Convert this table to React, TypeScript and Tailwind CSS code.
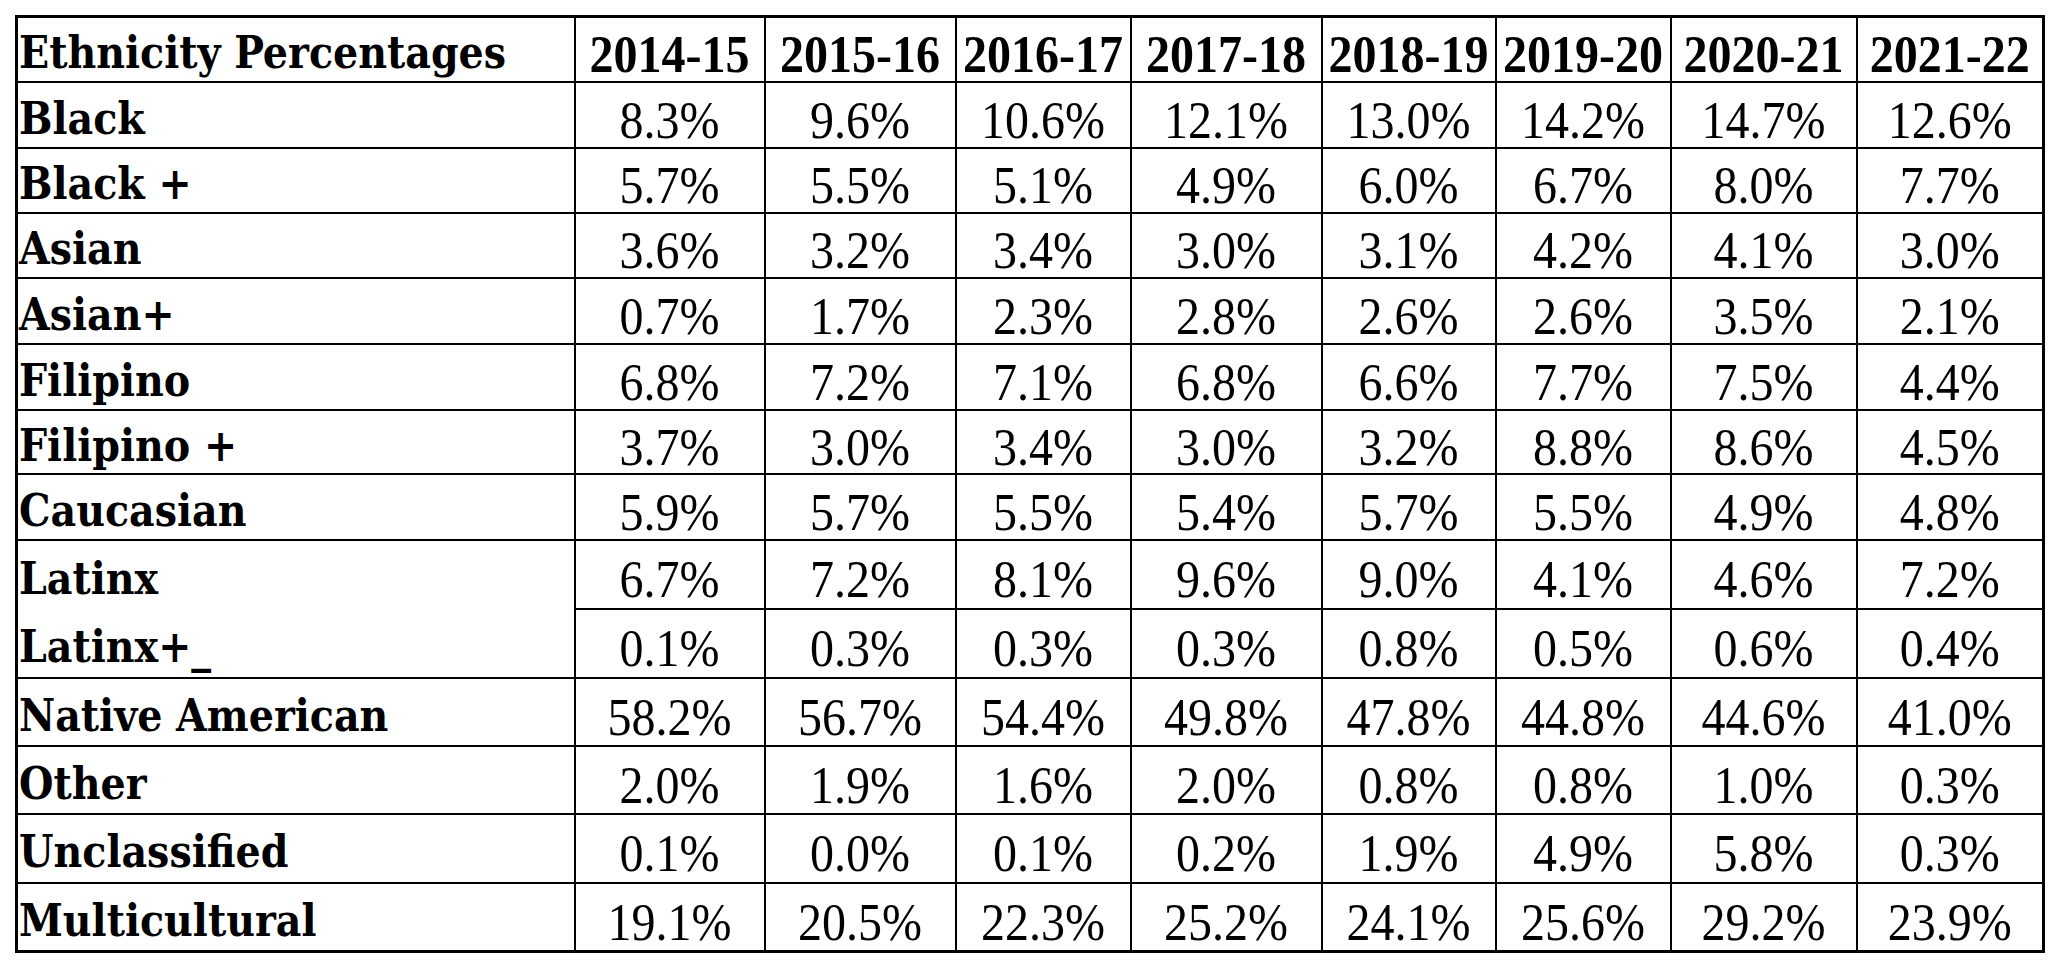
import React from 'react';

const years = ['2014-15', '2015-16', '2016-17', '2017-18', '2018-19', '2019-20', '2020-21', '2021-22'];

// line-to-line widths read off the reference
const colWidths = [558, 190, 191, 175, 191, 174, 175, 186, 187];

type Row = { label: string; values: string[]; h: number; open?: 'top' | 'bottom' };

const rows: Row[] = [
  { label: 'Black', values: ['8.3%', '9.6%', '10.6%', '12.1%', '13.0%', '14.2%', '14.7%', '12.6%'], h: 66 },
  { label: 'Black +', values: ['5.7%', '5.5%', '5.1%', '4.9%', '6.0%', '6.7%', '8.0%', '7.7%'], h: 65 },
  { label: 'Asian', values: ['3.6%', '3.2%', '3.4%', '3.0%', '3.1%', '4.2%', '4.1%', '3.0%'], h: 65 },
  { label: 'Asian+', values: ['0.7%', '1.7%', '2.3%', '2.8%', '2.6%', '2.6%', '3.5%', '2.1%'], h: 66 },
  { label: 'Filipino', values: ['6.8%', '7.2%', '7.1%', '6.8%', '6.6%', '7.7%', '7.5%', '4.4%'], h: 66 },
  { label: 'Filipino +', values: ['3.7%', '3.0%', '3.4%', '3.0%', '3.2%', '8.8%', '8.6%', '4.5%'], h: 64 },
  { label: 'Caucasian', values: ['5.9%', '5.7%', '5.5%', '5.4%', '5.7%', '5.5%', '4.9%', '4.8%'], h: 66 },
  { label: 'Latinx', values: ['6.7%', '7.2%', '8.1%', '9.6%', '9.0%', '4.1%', '4.6%', '7.2%'], h: 69, open: 'top' },
  { label: 'Latinx+_', values: ['0.1%', '0.3%', '0.3%', '0.3%', '0.8%', '0.5%', '0.6%', '0.4%'], h: 69, open: 'bottom' },
  { label: 'Native American', values: ['58.2%', '56.7%', '54.4%', '49.8%', '47.8%', '44.8%', '44.6%', '41.0%'], h: 68 },
  { label: 'Other', values: ['2.0%', '1.9%', '1.6%', '2.0%', '0.8%', '0.8%', '1.0%', '0.3%'], h: 68 },
  { label: 'Unclassified', values: ['0.1%', '0.0%', '0.1%', '0.2%', '1.9%', '4.9%', '5.8%', '0.3%'], h: 69 },
  { label: 'Multicultural', values: ['19.1%', '20.5%', '22.3%', '25.2%', '24.1%', '25.6%', '29.2%', '23.9%'], h: 69 },
];

const labelFont = "[font-family:'DejaVu_Serif',serif] font-stretch-condensed font-bold text-[44px] leading-none";
const timesFont = "[font-family:'Liberation_Serif','Times_New_Roman',Times,serif] text-[48px] leading-none";

// the source picture is a little taller than the font draws
const Tall = ({ children }: { children: React.ReactNode }) => (
  <span className="inline-block scale-y-[1.1]">{children}</span>
);

export default function App() {
  return (
    <div className="min-h-screen bg-white pl-[15px] pt-[15px] text-black">
      <table className="table-fixed border-collapse border-[3px] border-black w-[2028px]">
        <colgroup>
          {colWidths.map((w, i) => (
            <col key={i} style={{ width: w }} />
          ))}
        </colgroup>
        <thead>
          <tr className="h-[65px]">
            <th className={`border-2 border-black pl-[1px] pt-[8px] text-left align-middle whitespace-nowrap ${labelFont}`}>
              Ethnicity Percentages
            </th>
            {years.map((y) => (
              <th key={y} className={`border-2 border-black px-0 pt-[9px] text-center align-middle whitespace-nowrap font-bold ${timesFont}`}>
                <Tall>{y}</Tall>
              </th>
            ))}
          </tr>
        </thead>
        <tbody>
          {rows.map((r) => (
            <tr key={r.label} style={{ height: r.h }}>
              <td
                className={`border-2 border-black pl-[1px] pt-[8px] align-middle whitespace-nowrap ${labelFont} ${
                  r.open === 'top' ? 'border-l-0 border-b-0 border-l-white' : ''
                } ${r.open === 'bottom' ? 'border-l-0 border-t-0 border-l-white' : ''}`}
              >
                {r.label}
              </td>
              {r.values.map((v, i) => (
                <td key={i} className={`border-2 border-black px-0 pt-[10px] text-center align-middle whitespace-nowrap ${timesFont}`}>
                  <Tall>{v}</Tall>
                </td>
              ))}
            </tr>
          ))}
        </tbody>
      </table>
    </div>
  );
}
